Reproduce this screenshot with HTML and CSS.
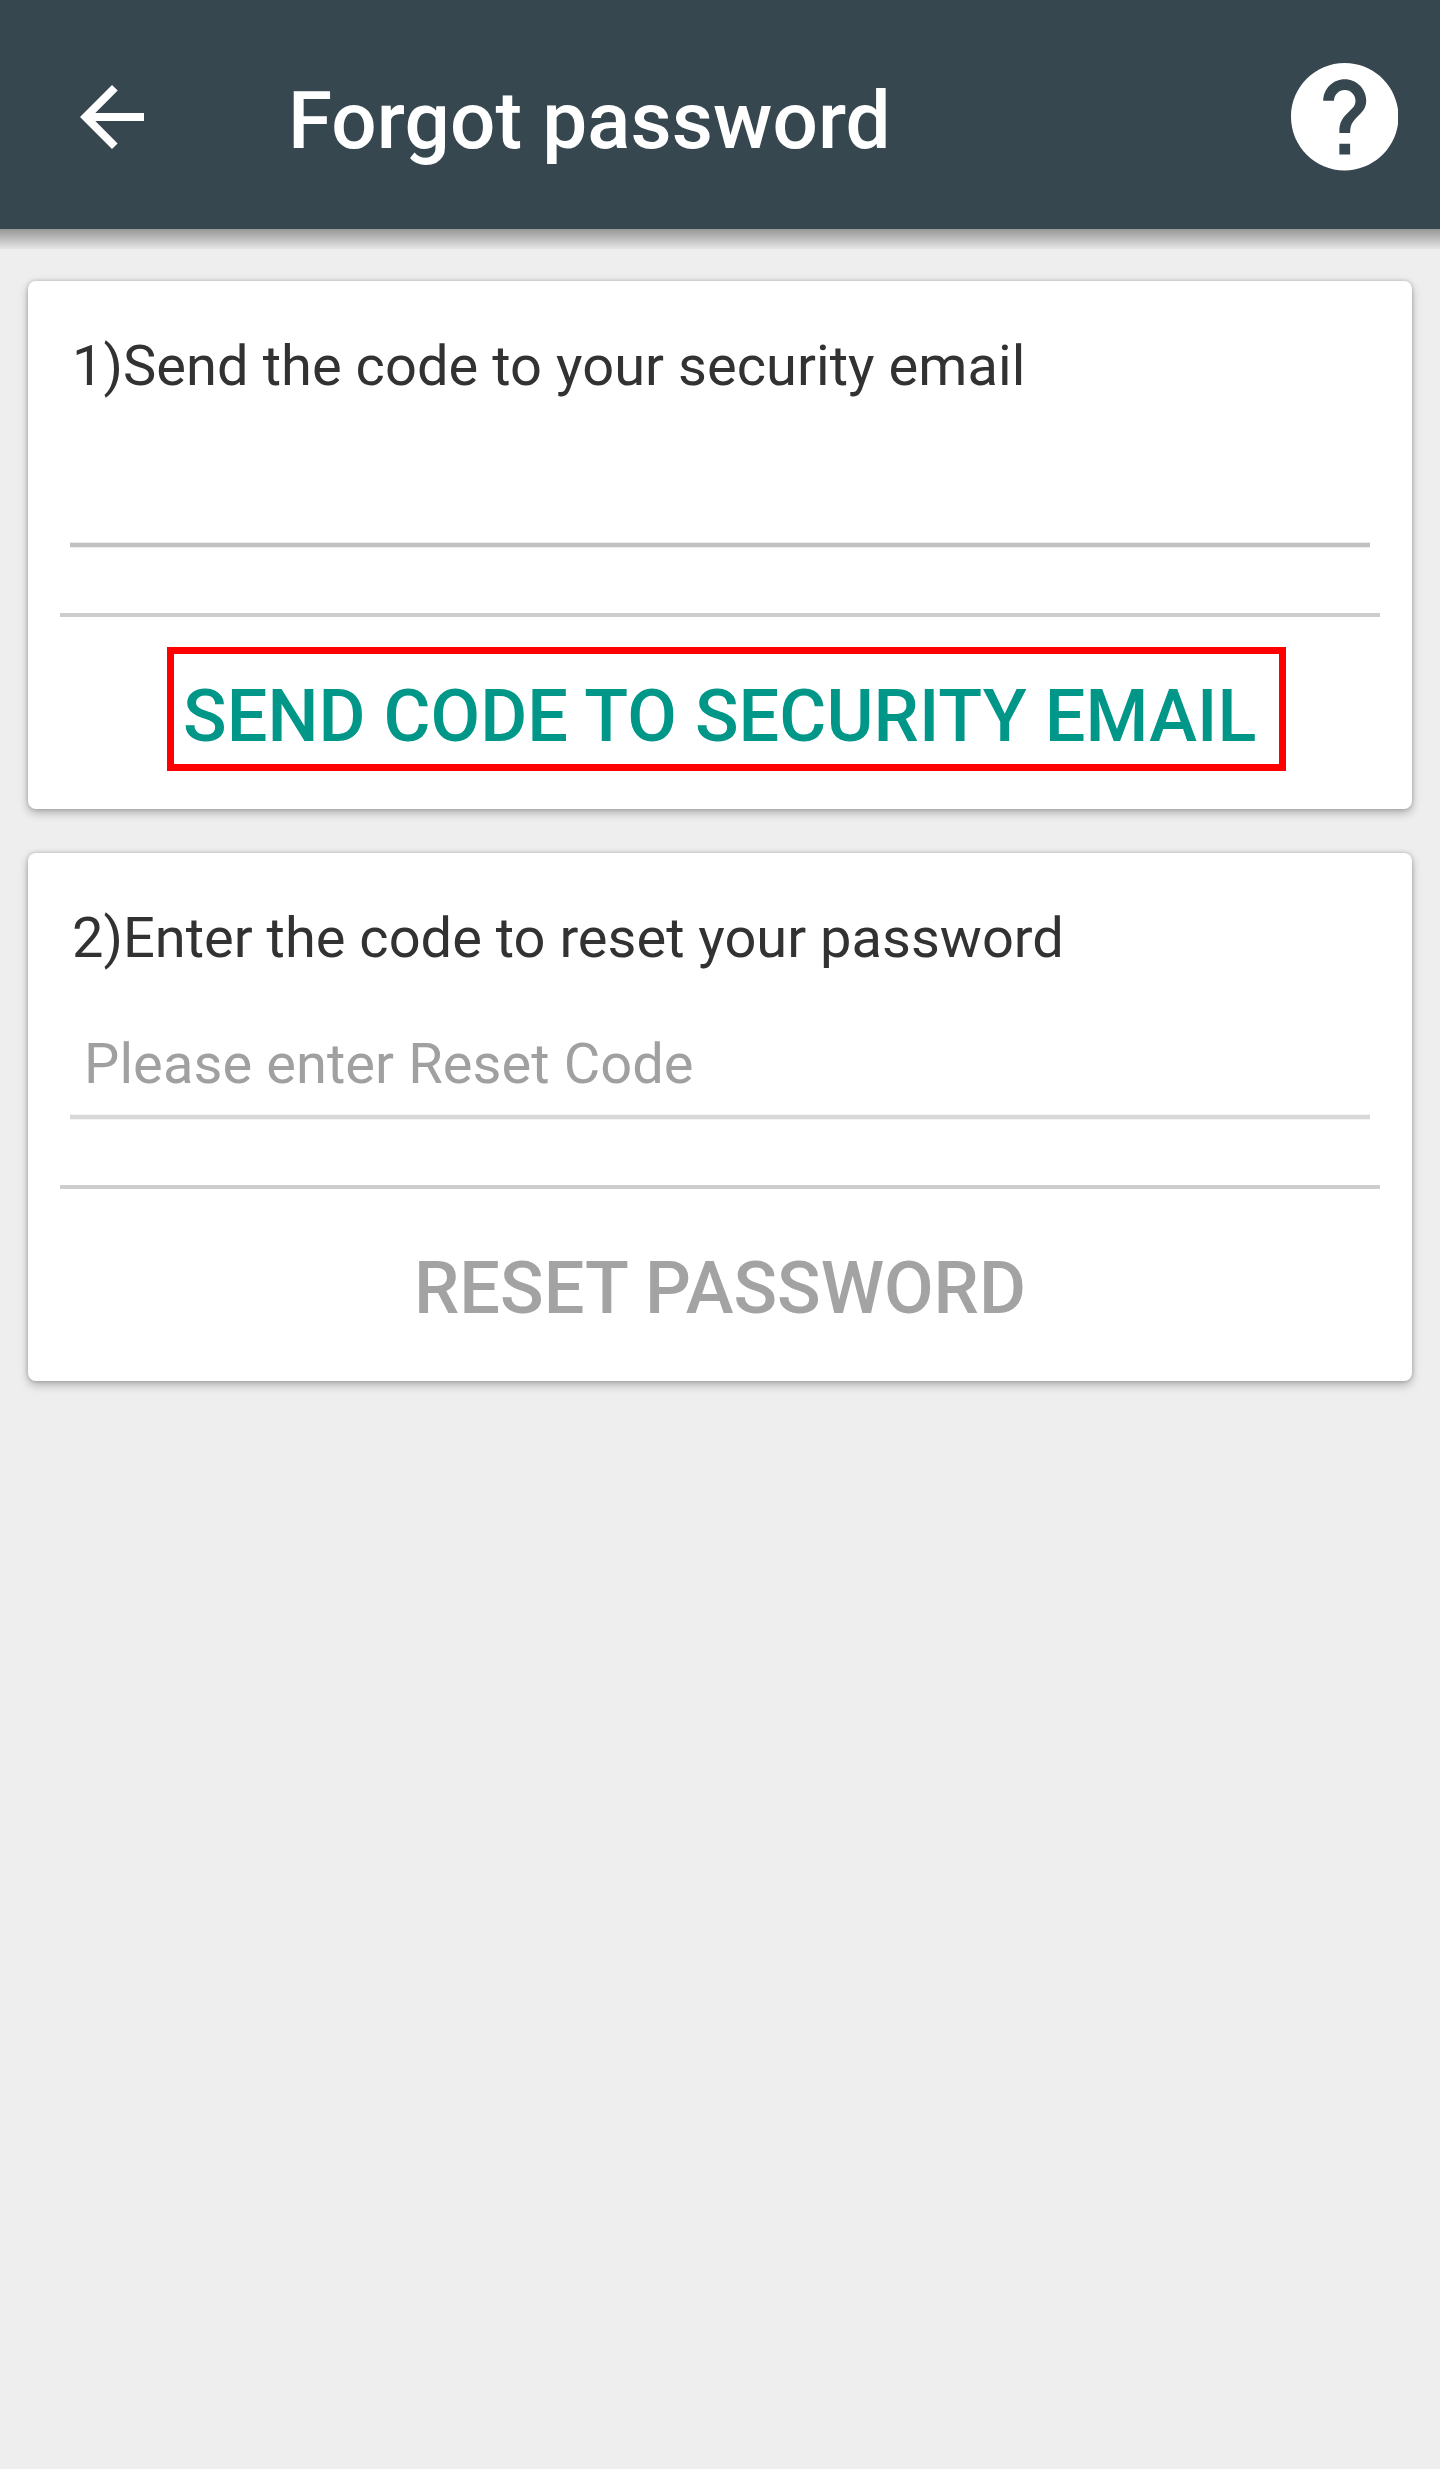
FILE: index.html
```html
<!DOCTYPE html>
<html lang="en">
<head>
<meta charset="utf-8">
<title>Forgot password</title>
<link rel="stylesheet" href="styles.css">
</head>
<body>
<header class="app-bar">
  <svg class="back" viewBox="0 0 64 64" role="img" aria-label="Back"><path d="M64 28H15.300L37.700 5.600L32 0L0 32L32 64L37.600 58.400L15.300 36H64Z"/></svg>
  <h1 class="title">Forgot password</h1>
  <svg class="help" viewBox="2 2 20 20" role="img" aria-label="Help"><path d="M12 2C6.480 2 2 6.480 2 12s4.480 10 10 10 10-4.480 10-10S17.520 2 12 2zm1 17h-2v-2h2v2zm2.070-7.750l-.9.920C13.450 12.900 13 13.500 13 15h-2v-.5c0-1.100.45-2.100 1.170-2.830l1.240-1.260c.37-.36.59-.86.59-1.410 0-1.100-.9-2-2-2s-2 .9-2 2H8c0-2.210 1.790-4 4-4s4 1.790 4 4c0 .88-.36 1.680-.93 2.250z"/></svg>
</header>
<main class="content">
  <section class="card">
    <h2 class="label label-spaced">1)Send the code to your security email</h2>
    <div class="field field-active"></div>
    <div class="actions"><button class="action highlighted">SEND CODE TO SECURITY EMAIL</button></div>
  </section>
  <section class="card">
    <h2 class="label">2)Enter the code to reset your password</h2>
    <div class="field">Please enter Reset Code</div>
    <div class="actions"><button class="action disabled">RESET PASSWORD</button></div>
  </section>
</main>
</body>
</html>
```
FILE: styles.css
```css
* { box-sizing: border-box; }
body { margin: 0; min-height: 2469px; background: #eee; font-family: Roboto, sans-serif; }

.app-bar { height: 229px; background: #37474f; display: flex; align-items: center; padding: 5px 42px 0 80px; }
.back { width: 64px; height: 64px; fill: #fff; }
.title { margin: 8px auto 0 144px; color: #fff; font-size: 80px; font-weight: 500; line-height: 94px; letter-spacing: .1px; white-space: nowrap; }
.help { width: 107.500px; height: 107.500px; fill: #fff; }

/* The gradient is the shadow cast by the app bar. */
.content { display: flex; flex-direction: column; gap: 44px; padding: 52px 28px 0; background: linear-gradient(#979797, #e5e5e5) top / 100% 20px no-repeat; }
.card { height: 528px; background: #fff; border-radius: 8px; padding: 50px 32px 0; box-shadow: 0 4px 10px rgba(0,0,0,.26), 0 0 4px rgba(0,0,0,.2); }
.label { margin: 0 0 0 12px; font-size: 56px; font-weight: 400; line-height: 70px; color: #323232; white-space: nowrap; }
.label-spaced { letter-spacing: .05px; }

.field {
  --line: #d8d8d8;
  --edge: #f3f3f3;
  height: 147px;
  margin: 0 10px 65px;
  padding: 56px 14px 0;
  font-size: 56px;
  line-height: 70px;
  letter-spacing: .08px;
  color: #a0a0a0;
  background: linear-gradient(var(--edge) 1px, var(--line) 1px 5px, var(--edge) 5px) bottom / 100% 6px no-repeat;
}
.field-active { --line: #c1c1c1; --edge: #ececec; }

.actions { display: flex; justify-content: center; border-top: 4px solid #cdcdcd; padding-top: 30px; }
.action { height: 124px; border: 0; background: none; padding: 15px 0 0; font: 500 72px/84px Roboto, sans-serif; color: #009688; white-space: nowrap; }
.highlighted { width: 1119px; margin-left: 13px; padding-left: 9px; border: 7px solid #f00; text-align: left; letter-spacing: .06px; }
.disabled { color: #a3a3a3; }
```
